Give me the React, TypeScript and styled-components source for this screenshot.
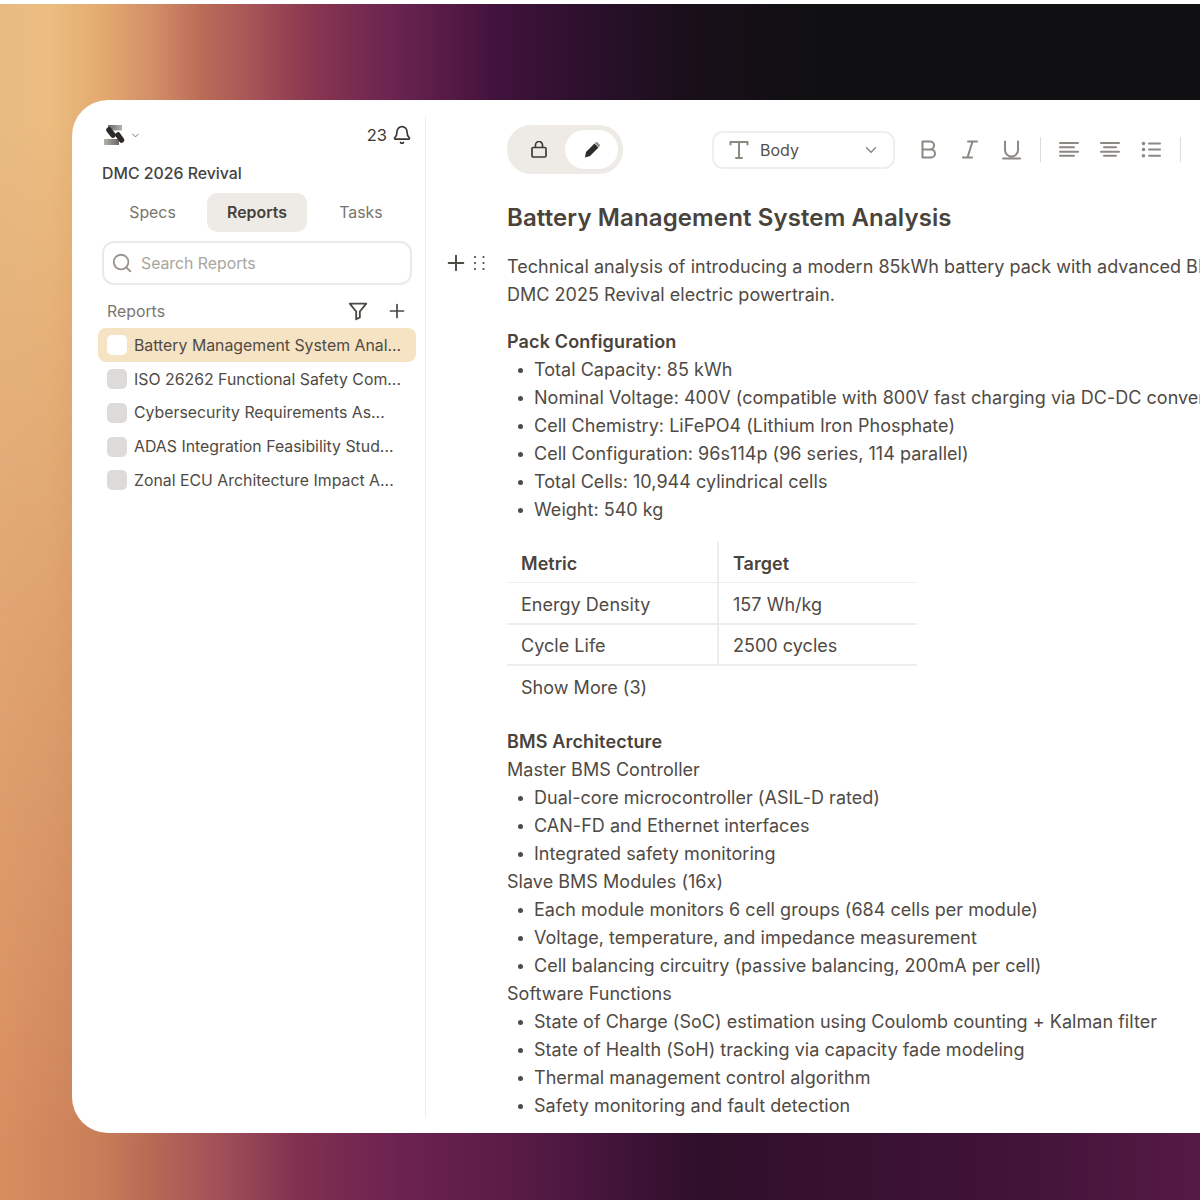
import React from "react";
import styled, { createGlobalStyle } from "styled-components";

const GlobalStyle = createGlobalStyle`
  html, body { margin: 0; padding: 0; background: #fff; }
  body { font-family: Inter, "Noto Sans", sans-serif; color: #4f4a44; }
`;

/* === page === */
const Page = styled.div`
  width: 1200px;
  height: 1200px;
  padding-top: 4px;
  box-sizing: border-box;
  overflow: hidden;
`;

const Stage = styled.div`
  position: relative;
  height: 1196px;
  box-sizing: border-box;
  padding: 96px 0 67px 72px;
  display: flex;
  background: linear-gradient(90deg, #e8bb84 0, #ebbd80 50px, #e4ab70 100px, #d49068 150px, #bc6d58 200px, #a85558 250px, #8f3b50 300px, #7a2d50 350px, #682350 400px, #551a45 450px, #40123c 500px, #28102a 600px, #180f18 700px, #101012 820px);

  &::before {
    content: "";
    position: absolute;
    inset: 0;
    background: linear-gradient(90deg, #d98e60 0, #c87e58 100px, #b86a55 150px, #a85858 200px, #803050 300px, #6c2250 400px, #5c1c48 500px, #45153c 600px, #2e0f2a 700px, #35102e 800px, #3f1338 1000px, #551a45 1200px);
    -webkit-mask-image: linear-gradient(to bottom, transparent 10%, #000 95%);
    mask-image: linear-gradient(to bottom, transparent 10%, #000 95%);
  }
`;

const Card = styled.div`
  position: relative;
  flex: 1;
  display: flex;
  min-width: 0;
  box-sizing: border-box;
  padding: 16px 0;
  background: #fff;
  border-radius: 36px 0 0 36px;
  overflow: hidden;
`;

/* === sidebar === */
const Sidebar = styled.aside`
  width: 354px;
  flex: none;
  box-sizing: border-box;
  padding: 0 9px 0 26px;
  border-right: 1px solid #efedea;
`;

const TopRow = styled.div`
  display: flex;
  align-items: center;
  justify-content: space-between;
  height: 38px;
  padding: 0 6px;
`;

const LogoGroup = styled.div`
  display: flex;
  align-items: center;
  gap: 5px;
`;

const Notif = styled.div`
  display: flex;
  align-items: center;
  gap: 5px;
  font-size: 16.5px;
  color: #3a3632;
  margin-right: -2px;
`;

const ProjectName = styled.div`
  margin: 10px 0 0 4px;
  font-size: 15.85px;
  line-height: 20px;
  font-weight: 500;
  color: #45433f;
`;

const Tabs = styled.div`
  display: flex;
  margin: 9px 0 0;
`;

const Tab = styled.div<{ $active?: boolean; $w: number }>`
  width: ${({ $w }) => $w}px;
  height: 39px;
  box-sizing: border-box;
  padding-bottom: 1px;
  display: flex;
  align-items: center;
  justify-content: center;
  border-radius: 10px;
  font-size: 15.85px;
  font-weight: ${({ $active }) => ($active ? 600 : 400)};
  color: ${({ $active }) => ($active ? "#45403a" : "#79746e")};
  background: ${({ $active }) => ($active ? "#eeebe6" : "transparent")};
`;

const Search = styled.div`
  display: flex;
  align-items: center;
  gap: 8px;
  width: 310px;
  height: 44px;
  box-sizing: border-box;
  margin: 9px 0 0 4px;
  padding: 0 7px;
  border: 2px solid #eceae6;
  border-radius: 12px;
  font-size: 15.8px;
  color: #a9a59f;
`;

const ListHead = styled.div`
  display: flex;
  align-items: center;
  height: 24px;
  margin: 14px 0 0 9px;
  font-size: 15.85px;
  color: #7b7670;
`;

const HeadTitle = styled.span`
  flex: 1;
`;

const HeadIcons = styled.div`
  display: flex;
  align-items: center;
  gap: 20px;
  margin-right: 11px;
`;

const ReportList = styled.div`
  margin-top: 5px;
`;

const ReportRow = styled.div<{ $active?: boolean }>`
  display: flex;
  align-items: center;
  gap: 7px;
  width: 318px;
  height: 33.75px;
  box-sizing: border-box;
  padding: 1px 0 0 9px;
  border-radius: 8px;
  font-size: 15.85px;
  color: #504a44;
  white-space: nowrap;
  background: ${({ $active }) => ($active ? "#f6e3c3" : "transparent")};
`;

const Thumb = styled.span<{ $active?: boolean }>`
  width: 20px;
  height: 20px;
  flex: none;
  border-radius: 5px;
  background: ${({ $active }) => ($active ? "#fff" : "#dcdbd9")};
`;

/* === editor === */
const Main = styled.main`
  flex: 1;
  min-width: 0;
  padding-left: 81px;
  overflow: hidden;
`;

const Toolbar = styled.div`
  display: flex;
  align-items: center;
  height: 49px;
  margin-top: 9px;
`;

const ModeToggle = styled.div`
  display: flex;
  align-items: center;
  width: 116px;
  height: 49px;
  flex: none;
  box-sizing: border-box;
  padding: 5px;
  border-radius: 24px;
  background: #eeebe6;
`;

const ModeBtn = styled.div<{ $active?: boolean }>`
  display: flex;
  align-items: center;
  justify-content: center;
  width: 53px;
  height: 39px;
  border-radius: 20px;
  background: ${({ $active }) => ($active ? "#fff" : "transparent")};
`;

const StyleSelect = styled.div`
  display: flex;
  align-items: center;
  width: 183px;
  height: 38px;
  flex: none;
  box-sizing: border-box;
  margin-left: 89px;
  padding: 0 13px 0 15px;
  border: 2px solid #f0eeea;
  border-radius: 11px;
  font-size: 16px;
  color: #57514b;
`;

const SelectLabel = styled.span`
  flex: 1;
  margin-left: 11px;
`;

const FormatBtn = styled.div<{ $gap: number }>`
  display: flex;
  flex: none;
  margin-left: ${({ $gap }) => $gap}px;
`;

const Divider = styled.div<{ $gap: number }>`
  width: 1px;
  height: 25px;
  flex: none;
  margin-left: ${({ $gap }) => $gap}px;
  background: #dedcd8;
`;

const Doc = styled.div`
  font-size: 18px;
  line-height: 28px;
  letter-spacing: 0.03px;
  color: #504a44;
  white-space: nowrap;
`;

const Title = styled.h1`
  margin: 25px 0 0;
  font-size: 24px;
  line-height: 38px;
  font-weight: 600;
  letter-spacing: 0.12px;
  color: #4a433c;
`;

const BlockRow = styled.div`
  position: relative;
  margin-top: 16px;
`;

const BlockHandle = styled.div`
  position: absolute;
  left: -60px;
  top: 1px;
  display: flex;
  align-items: center;
  gap: 8px;
`;

const Para = styled.p`
  margin: 0;
`;

const Heading = styled.h3<{ $top: number }>`
  margin: ${({ $top }) => $top}px 0 0;
  font-size: 18px;
  line-height: 28px;
  font-weight: 600;
  letter-spacing: 0.15px;
  color: #4a433c;
`;

const Bullets = styled.ul`
  margin: 0;
  padding: 0 0 0 27px;

  li {
    position: relative;
    list-style: none;
  }

  li::before {
    content: "";
    position: absolute;
    left: -16px;
    top: 12px;
    width: 5px;
    height: 5px;
    border-radius: 50%;
    background: #504a44;
  }
`;

const Table = styled.div`
  width: 410px;
  margin-top: 18px;
`;

const TableRow = styled.div<{ $head?: boolean }>`
  display: grid;
  grid-template-columns: 212px 1fr;
  height: ${({ $head }) => ($head ? "41px" : "41.5px")};
  border-bottom: ${({ $head }) => ($head ? "1px" : "2px")} solid #efedea;
  box-sizing: border-box;
`;

const Cell = styled.div<{ $head?: boolean; $last?: boolean }>`
  display: flex;
  align-items: center;
  padding: 4px 0 0 14px;
  font-weight: ${({ $head }) => ($head ? 600 : 400)};
  color: ${({ $head }) => ($head ? "#4a433c" : "#504a44")};
  border-right: ${({ $last }) => ($last ? "none" : "2px solid #efedea")};
`;

const ShowMore = styled.div`
  height: 43px;
  box-sizing: border-box;
  display: flex;
  align-items: center;
  padding: 1px 0 0 14px;
`;

/* === icons === */
const Logo = () => (
  <svg width="21" height="22" viewBox="0 0 21 22">
    <defs>
      <linearGradient id="lg1" x1="0" x2="1">
        <stop offset="0" stopColor="#6a6662" />
        <stop offset="1" stopColor="#b5b2ae" />
      </linearGradient>
      <linearGradient id="lg2" x1="0" x2="1">
        <stop offset="0" stopColor="#b5b2ae" />
        <stop offset="1" stopColor="#6a6662" />
      </linearGradient>
    </defs>
    <rect x="4" y="1" width="14" height="5.5" fill="url(#lg1)" />
    <rect x="0" y="15" width="15" height="6" fill="url(#lg2)" />
    <path d="M5 6 L9 11" stroke="#2c2a28" strokeWidth="5.5" strokeLinecap="round" />
    <path d="M14 11 L17.500 16" stroke="#2c2a28" strokeWidth="5.5" strokeLinecap="round" />
  </svg>
);

const Chevron = ({ size, color }: { size: number; color: string }) => (
  <svg width={size} height={size} viewBox="0 0 24 24" fill="none" stroke={color} strokeWidth="2" strokeLinecap="round" strokeLinejoin="round">
    <path d="M6 9l6 6 6-6" />
  </svg>
);

const Bell = () => (
  <svg width="20" height="20" viewBox="0 0 24 24" fill="none" stroke="#3a3632" strokeWidth="2" strokeLinecap="round" strokeLinejoin="round">
    <path d="M10.3 21a2 2 0 0 0 3.4 0" />
    <path d="M3.3 15.3A1 1 0 0 0 4 17h16a1 1 0 0 0 .7-1.7C19.4 14 18 12.5 18 8A6 6 0 0 0 6 8c0 4.5-1.400 6-2.700 7.300" />
  </svg>
);

const SearchIcon = () => (
  <svg width="22" height="22" viewBox="0 0 24 24" fill="none" stroke="#9a968f" strokeWidth="2" strokeLinecap="round">
    <circle cx="11" cy="11" r="8" />
    <path d="M21 21l-4.3-4.3" />
  </svg>
);

const Funnel = () => (
  <svg width="22" height="22" viewBox="0 0 24 24" fill="none" stroke="#4c4843" strokeWidth="2" strokeLinecap="round" strokeLinejoin="round">
    <path d="M3 4h18l-7 8.5V19l-4 2v-8.5z" />
  </svg>
);

const Plus = ({ size }: { size: number }) => (
  <svg width={size} height={size} viewBox="0 0 16 16" fill="none" stroke="#4c4843" strokeWidth="1.7" strokeLinecap="round">
    <path d="M8 1.5v13M1.5 8h13" />
  </svg>
);

const Grip = () => (
  <svg width="12" height="16" viewBox="0 0 12 16" fill="#4c4843">
    {[2, 8, 14].map((y) => (
      <React.Fragment key={y}>
        <circle cx="2" cy={y} r="1.1" />
        <circle cx="10.5" cy={y} r="1.1" />
      </React.Fragment>
    ))}
  </svg>
);

const Lock = () => (
  <svg width="18" height="18" viewBox="0 0 18 18" fill="none" stroke="#3f3b37" strokeWidth="1.7" strokeLinejoin="round">
    <rect x="2" y="6.500" width="14" height="9.500" rx="1.200" />
    <path d="M5.500 6.500V4a3.500 3.500 0 0 1 7 0v2.500" />
  </svg>
);

const Pencil = () => (
  <svg width="18" height="18" viewBox="0 0 18 18">
    <path d="M11.5 2.5l4 4-8.500 8.500-5 1.500 1-5.500z" fill="#2f2b28" />
    <path d="M12.5 1.500a1.500 1.500 0 0 1 2 0l2 2a1.500 1.500 0 0 1 0 2l-.6.6-4-4z" fill="#8c8882" />
  </svg>
);

const TextIcon = () => (
  <svg width="20" height="20" viewBox="0 0 20 20" fill="none" stroke="#8c8882" strokeWidth="2" strokeLinecap="round" strokeLinejoin="round">
    <path d="M1.500 4.500V2h17v2.500M10 2v16M7 18h6" />
  </svg>
);

const ToolIcon = ({ children }: { children: React.ReactNode }) => (
  <svg width="20" height="20" viewBox="0 0 20 20" fill="none" stroke="#8c8882" strokeWidth="2" strokeLinecap="round" strokeLinejoin="round">
    {children}
  </svg>
);

const reports = [
  "Battery Management System Anal...",
  "ISO 26262 Functional Safety Com...",
  "Cybersecurity Requirements As...",
  "ADAS Integration Feasibility Stud...",
  "Zonal ECU Architecture Impact A...",
];

export default function App() {
  return (
    <Page>
      <GlobalStyle />
      <Stage>
        <Card>
          <Sidebar>
            <TopRow>
              <LogoGroup>
                <Logo />
                <Chevron size={11} color="#6d6863" />
              </LogoGroup>
              <Notif>
                23
                <Bell />
              </Notif>
            </TopRow>
            <ProjectName>DMC 2026 Revival</ProjectName>
            <Tabs>
              <Tab $w={109}>Specs</Tab>
              <Tab $w={100} $active>Reports</Tab>
              <Tab $w={108}>Tasks</Tab>
            </Tabs>
            <Search>
              <SearchIcon />
              Search Reports
            </Search>
            <ListHead>
              <HeadTitle>Reports</HeadTitle>
              <HeadIcons>
                <Funnel />
                <Plus size={16} />
              </HeadIcons>
            </ListHead>
            <ReportList>
              {reports.map((r, i) => (
                <ReportRow key={r} $active={i === 0}>
                  <Thumb $active={i === 0} />
                  {r}
                </ReportRow>
              ))}
            </ReportList>
          </Sidebar>
          <Main>
            <Toolbar>
              <ModeToggle>
                <ModeBtn><Lock /></ModeBtn>
                <ModeBtn $active><Pencil /></ModeBtn>
              </ModeToggle>
              <StyleSelect>
                <TextIcon />
                <SelectLabel>Body</SelectLabel>
                <Chevron size={18} color="#8c8882" />
              </StyleSelect>
              <FormatBtn $gap={24}>
                <ToolIcon><path d="M3.500 1.500h7.500a4 4 0 0 1 0 8H3.500zM3.500 9.500h8.500a4 4 0 0 1 0 8H3.500z" /></ToolIcon>
              </FormatBtn>
              <FormatBtn $gap={21}>
                <ToolIcon><path d="M8 1.500h9M3 17.500h9M12.500 1.500L7.500 17.500" /></ToolIcon>
              </FormatBtn>
              <FormatBtn $gap={21}>
                <ToolIcon><path d="M4 1.500V10a6.500 6.500 0 0 0 13 0V1.500M2 18.500h17" /></ToolIcon>
              </FormatBtn>
              <Divider $gap={19} />
              <FormatBtn $gap={18}>
                <ToolIcon><path d="M1 3h18M1 7.300h14M1 11.700h18M1 15.700h14" /></ToolIcon>
              </FormatBtn>
              <FormatBtn $gap={21}>
                <ToolIcon><path d="M1 3h18M4 7.300h12M1 11.700h18M4 15.700h12" /></ToolIcon>
              </FormatBtn>
              <FormatBtn $gap={21}>
                <ToolIcon>
                  <path d="M8 3.500h11M8 9.500h11M8 15.700h11" />
                  <circle cx="2.500" cy="3.500" r="1.800" fill="#8c8882" stroke="none" />
                  <circle cx="2.500" cy="9.500" r="1.800" fill="#8c8882" stroke="none" />
                  <circle cx="2.500" cy="15.700" r="1.800" fill="#8c8882" stroke="none" />
                </ToolIcon>
              </FormatBtn>
              <Divider $gap={19} />
            </Toolbar>
            <Doc>
              <Title>Battery Management System Analysis</Title>
              <BlockRow>
                <BlockHandle>
                  <Plus size={18} />
                  <Grip />
                </BlockHandle>
                <Para>
                  Technical analysis of introducing a modern 85kWh battery pack with advanced BMS integration into the
                  <br />
                  DMC 2025 Revival electric powertrain.
                </Para>
              </BlockRow>
              <Heading $top={19}>Pack Configuration</Heading>
              <Bullets>
                <li>Total Capacity: 85 kWh</li>
                <li>Nominal Voltage: 400V (compatible with 800V fast charging via DC-DC converter)</li>
                <li>Cell Chemistry: LiFePO4 (Lithium Iron Phosphate)</li>
                <li>Cell Configuration: 96s114p (96 series, 114 parallel)</li>
                <li>Total Cells: 10,944 cylindrical cells</li>
                <li>Weight: 540 kg</li>
              </Bullets>
              <Table>
                <TableRow $head>
                  <Cell $head>Metric</Cell>
                  <Cell $head $last>Target</Cell>
                </TableRow>
                <TableRow>
                  <Cell>Energy Density</Cell>
                  <Cell $last>157 Wh/kg</Cell>
                </TableRow>
                <TableRow>
                  <Cell>Cycle Life</Cell>
                  <Cell $last>2500 cycles</Cell>
                </TableRow>
                <ShowMore>Show More (3)</ShowMore>
              </Table>
              <Heading $top={19}>BMS Architecture</Heading>
              <Para>Master BMS Controller</Para>
              <Bullets>
                <li>Dual-core microcontroller (ASIL-D rated)</li>
                <li>CAN-FD and Ethernet interfaces</li>
                <li>Integrated safety monitoring</li>
              </Bullets>
              <Para>Slave BMS Modules (16x)</Para>
              <Bullets>
                <li>Each module monitors 6 cell groups (684 cells per module)</li>
                <li>Voltage, temperature, and impedance measurement</li>
                <li>Cell balancing circuitry (passive balancing, 200mA per cell)</li>
              </Bullets>
              <Para>Software Functions</Para>
              <Bullets>
                <li>State of Charge (SoC) estimation using Coulomb counting + Kalman filter</li>
                <li>State of Health (SoH) tracking via capacity fade modeling</li>
                <li>Thermal management control algorithm</li>
                <li>Safety monitoring and fault detection</li>
              </Bullets>
            </Doc>
          </Main>
        </Card>
      </Stage>
    </Page>
  );
}
